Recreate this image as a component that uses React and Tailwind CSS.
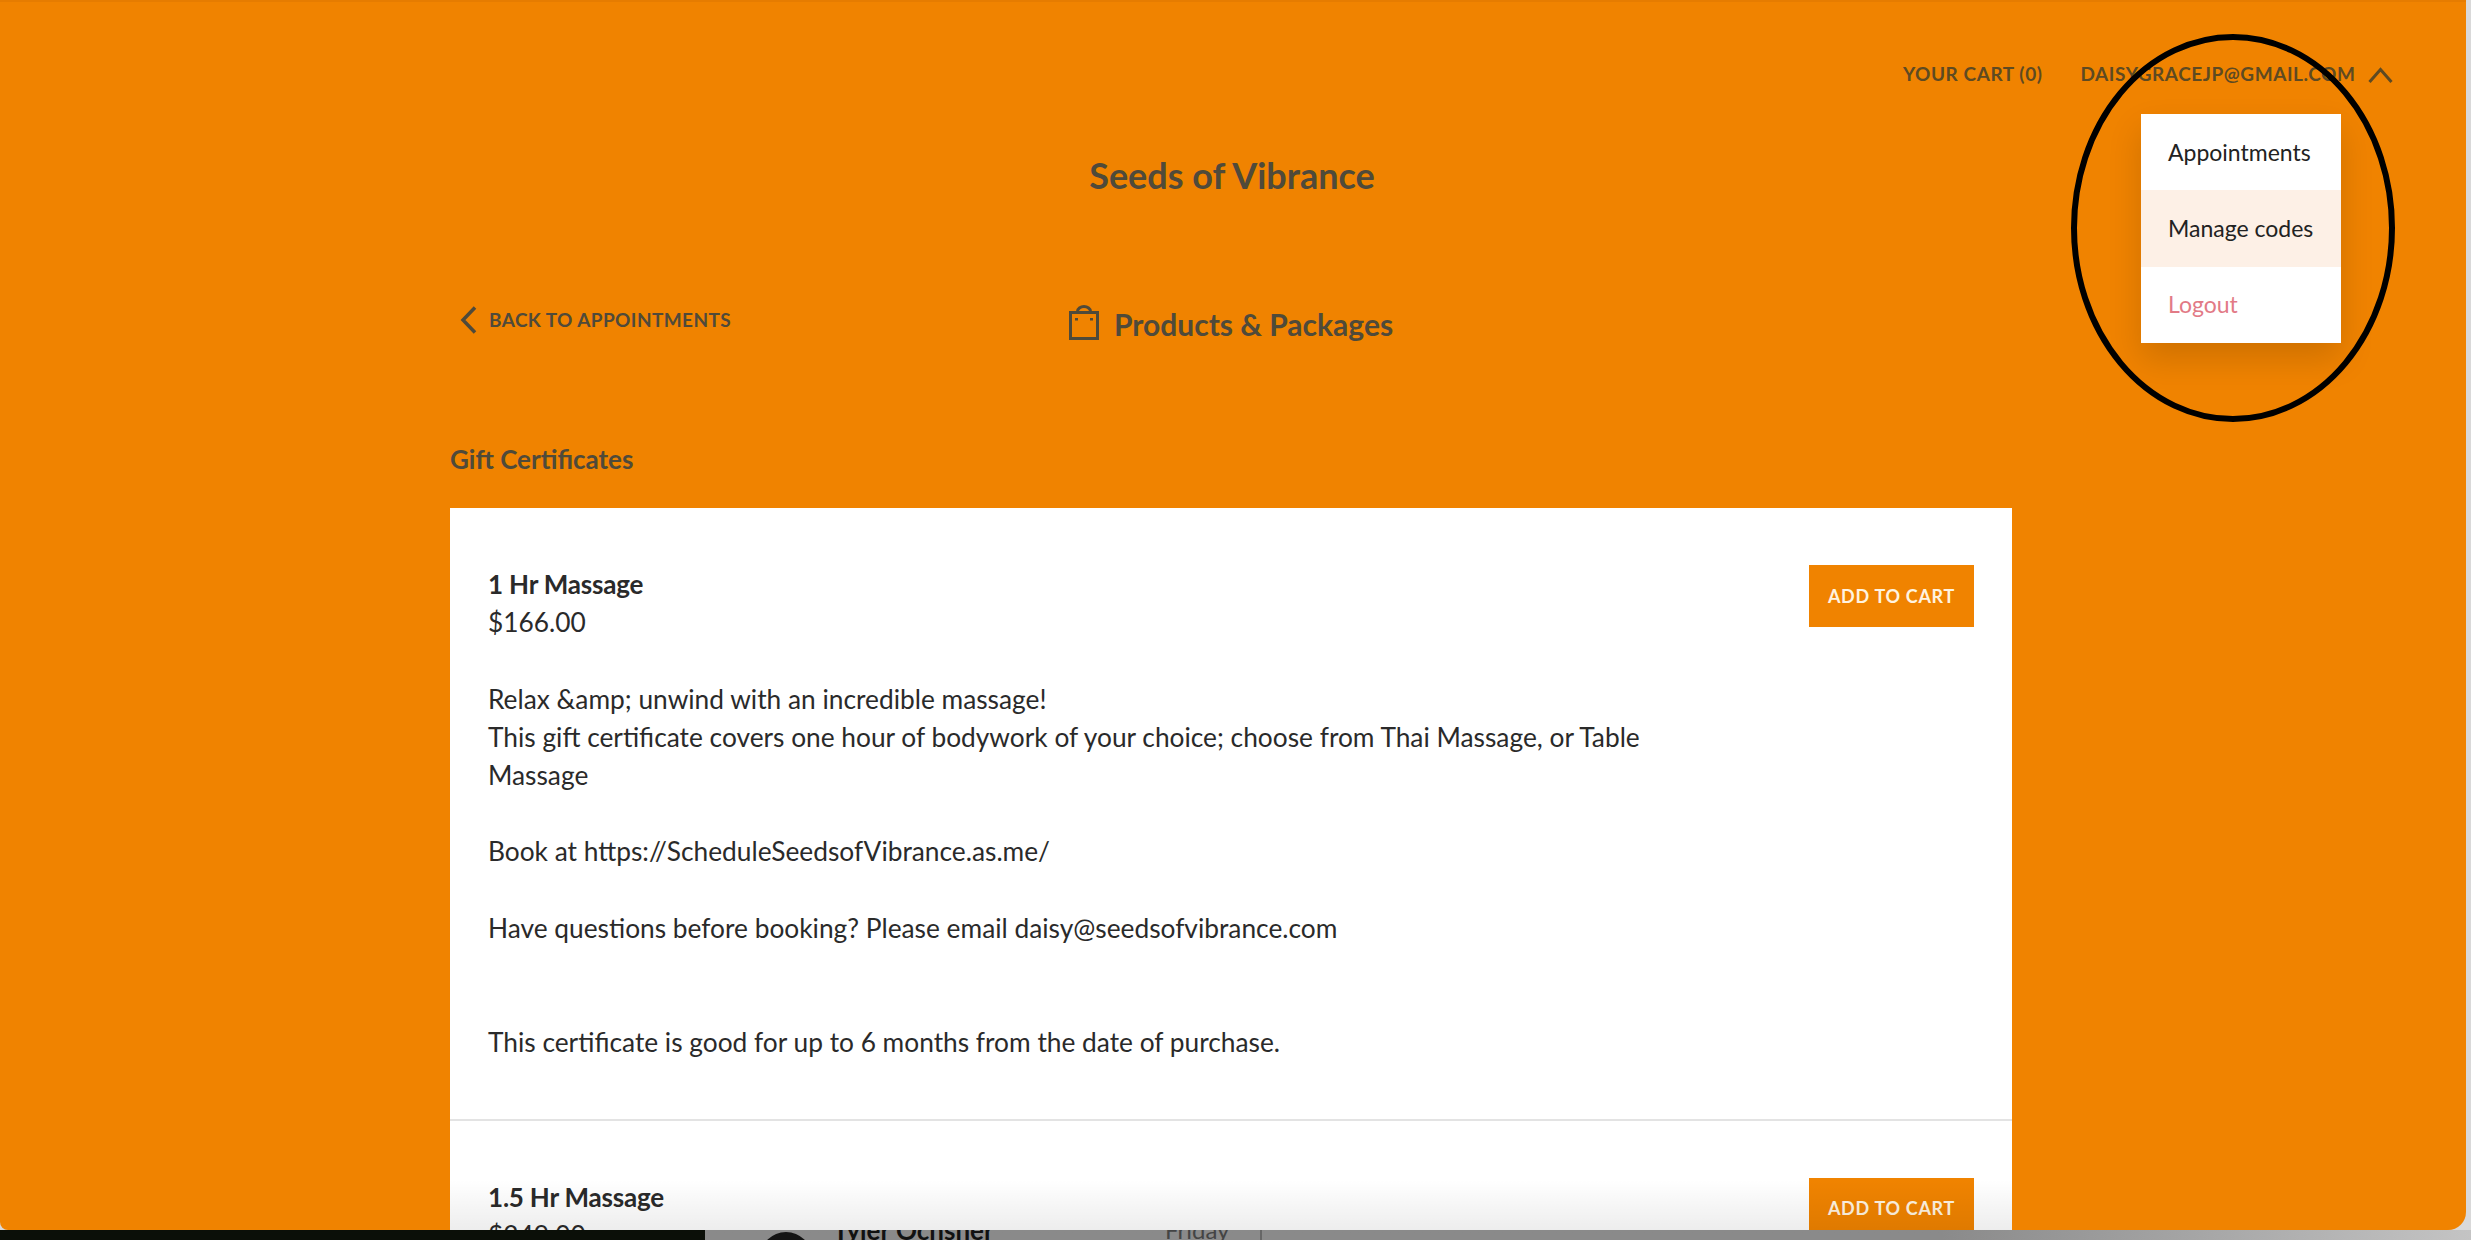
import React from 'react';

const font = { fontFamily: 'Lato, "Noto Sans", sans-serif' };

const BagIcon = () => (
  <svg width="30" height="35" viewBox="0 0 30 35" fill="none" stroke="currentColor" strokeWidth="3">
    <rect x="1.5" y="7.5" width="27" height="26" />
    <path d="M8.5 7.5V6.5a6.5 5 0 0 1 13 0v1" />
    <path d="M7.5 13v2.5M22.5 13v2.5" />
  </svg>
);

const Chevron = ({ d, w, h, sw = 3 }) => (
  <svg width={w} height={h} viewBox={`0 0 ${w} ${h}`} fill="none" stroke="currentColor" strokeWidth={sw}>
    <path d={d} />
  </svg>
);

const AddButton = () => (
  <button className="w-[165px] h-[62px] shrink-0 bg-[#f08300] text-[#fff3e0] text-[18px] font-bold tracking-[0.7px] uppercase">
    Add to cart
  </button>
);

const MenuItem = ({ label, className }) => (
  <div className={`h-[76.3px] flex items-center pl-[27px] text-[23px] ${className}`}>{label}</div>
);

export default function App() {
  return (
    <div className="relative w-[2471px] h-[1240px] overflow-hidden bg-[#d9d9d9]" style={font}>
      {/* window behind, only its top edge shows */}
      <div className="absolute left-0 right-0 bottom-0 h-[10px] flex">
        <div className="w-[705px] bg-[#0b0f08]" />
        <div className="flex-1 bg-gradient-to-r from-[#8a8a8a] from-70% to-[#c4c4c4]" />
      </div>
      <div className="absolute left-[760px] top-[1232px] w-[52px] h-[52px] rounded-full bg-[#141414]" />
      <div className="absolute left-[833px] top-[1215px] text-[26px] leading-[30px] font-bold text-[#111]">Tyler Ochsner</div>
      <div className="absolute left-[1165px] top-[1215px] text-[24px] leading-[30px] text-[#444]">Friday</div>
      <div className="absolute left-[1260px] top-[1230px] w-[2px] h-[10px] bg-[#666]" />

      {/* main window */}
      <div className="relative w-[2466px] h-[1230px] overflow-hidden rounded-bl-[8px] rounded-br-[18px] bg-[#f08300] border-t-2 border-[#e67c00] text-[#4f4a3a]">
        {/* top nav */}
        <div className="h-[100px] pt-[60px] flex items-start text-[19px] leading-[24px] font-bold tracking-[0.55px] uppercase text-[#5e4a22]">
          <span className="ml-[1903px]">Your cart (0)</span>
          <span className="ml-[38px]">daisygracejp@gmail.com</span>
          <span className="ml-[13px] mt-[5px]">
            <Chevron w={25} h={16} d="M1.5 15 12.5 2.5 23.5 15" />
          </span>
        </div>

        <h1 className="text-center text-[36px] leading-[46px] font-bold mt-[50px] ml-[-2px]">Seeds of Vibrance</h1>

        {/* page heading row */}
        <div className="relative mt-[107px] ml-[450px] w-[1562px] h-[60px] flex justify-center">
          <div className="absolute left-[10px] top-[1px] flex items-center gap-[12px] text-[19px] leading-[28px] font-bold tracking-[0.4px] uppercase">
            <Chevron w={17} h={28} sw={3.5} d="M15 1.5 3 14l12 12.5" />
            <span>Back to appointments</span>
          </div>
          <div className="flex items-start gap-[15px]">
            <BagIcon />
            <span className="text-[30px] leading-[38px] font-bold">Products &amp; Packages</span>
          </div>
        </div>

        <div className="ml-[450px] mt-[77px] text-[26px] leading-[34px] font-bold">Gift Certificates</div>

        {/* product list */}
        <div className="ml-[450px] mt-[32px] w-[1562px] bg-white text-[#2a2a2a]">
          <div className="flex items-start justify-between pt-[57px] pb-[57px] pl-[38px] pr-[38px] border-b-2 border-[#e3e3e3]">
            <div className="w-[1200px] text-[26.3px] leading-[38.2px]">
              <div className="font-bold text-[26px] tracking-[-0.2px]">1 Hr Massage</div>
              <div>$166.00</div>
              <div className="mt-[38.2px]">Relax &amp;amp; unwind with an incredible massage!</div>
              <div>This gift certificate covers one hour of bodywork of your choice; choose from Thai Massage, or Table Massage</div>
              <div className="mt-[38.2px]">Book at https://ScheduleSeedsofVibrance.as.me/</div>
              <div className="mt-[38.2px]">Have questions before booking? Please email daisy@seedsofvibrance.com</div>
              <div className="mt-[76.4px]">This certificate is good for up to 6 months from the date of purchase.</div>
            </div>
            <AddButton />
          </div>
          <div className="flex items-start justify-between pt-[57px] pl-[38px] pr-[38px]">
            <div className="text-[26.3px] leading-[38.2px]">
              <div className="font-bold text-[26px] tracking-[-0.2px]">1.5 Hr Massage</div>
              <div>$249.00</div>
            </div>
            <AddButton />
          </div>
        </div>

        {/* fade on the card where the window meets the one behind */}
        <div className="absolute left-[450px] w-[1562px] bottom-0 h-[50px] bg-gradient-to-b from-transparent to-[#00000012] pointer-events-none" />

        {/* account dropdown */}
        <div className="absolute left-[2141px] top-[112px] w-[200px] bg-white shadow-[0_16px_32px_rgba(0,0,0,0.14)] text-[#222]">
          <MenuItem label="Appointments" />
          <MenuItem label="Manage codes" className="bg-[#fdf0e6]" />
          <MenuItem label="Logout" className="text-[#e27a86]" />
        </div>

        {/* hand drawn circle on top of the screenshot */}
        <svg className="absolute left-[2065px] top-[26px] pointer-events-none" width="340" height="400" viewBox="0 0 340 400" fill="none">
          <ellipse cx="168" cy="200" rx="159" ry="191" stroke="#000" strokeWidth="6" />
        </svg>
      </div>
    </div>
  );
}
